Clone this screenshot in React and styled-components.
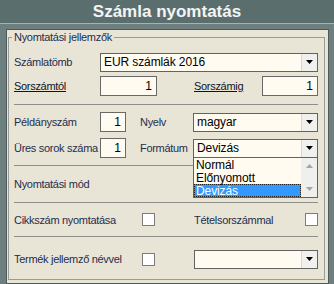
import React from "react";
import styled, { createGlobalStyle } from "styled-components";

const Global = createGlobalStyle`
  html, body { margin: 0; padding: 0; }
  body {
    background: #6e7f7f;
    font-family: "Liberation Sans", Arial, sans-serif;
    font-size: 11px;
    letter-spacing: -0.3px;
    width: 334px;
    height: 284px;
    overflow: hidden;
  }
`;

const TitleBar = styled.div`
  height: 23px;
  background: #5b6e6e;
  border-bottom: 1px solid #a4b2b2;
  color: #f4f4f4;
  font-weight: bold;
  font-size: 17px;
  letter-spacing: 0;
  line-height: 23px;
  text-align: center;
`;

const Body = styled.div`
  padding: 5px 0 0 6px;
`;

const Panel = styled.div`
  width: 323px;
  box-sizing: border-box;
  background: #e9e5d6;
  border: 1px solid #4f5959;
  padding: 0 3px 3px 1px;
`;

const Group = styled.fieldset`
  margin: 0;
  border: 1px solid #9a9a96;
  padding: 8px 6px 5px 5px;
  min-width: 0;
`;

const Legend = styled.legend`
  padding: 0 2px;
  margin-left: -2px;
  line-height: 14px;
  color: #1e2d4c;
`;

const Row = styled.div`
  flex: 1;
  display: flex;
  align-items: center;
  height: 20px;
  margin-top: ${(p) => p.$mt || 0}px;
`;

const Section = styled.div`
  display: flex;
  align-items: ${(p) => (p.$pt ? "flex-start" : "center")};
  height: ${(p) => p.$h}px;
  padding-top: ${(p) => p.$pt || 0}px;
  box-sizing: border-box;
`;

const Sep = styled.div`
  height: 1px;
  background: #8f8f8c;
  margin-top: ${(p) => p.$mt || 0}px;
`;

const Label = styled.span`
  flex: ${(p) => (p.$w ? "none" : "1")};
  width: ${(p) => (p.$w ? `${p.$w}px` : "auto")};
  margin-left: ${(p) => p.$ml || 0}px;
  color: ${(p) => (p.$link ? "#0c1426" : "#1e2d4c")};
  text-decoration: ${(p) => (p.$link ? "underline" : "none")};
  white-space: nowrap;
`;

const NumInput = styled.div`
  flex: ${(p) => (p.$w ? "none" : "1")};
  width: ${(p) => (p.$w ? `${p.$w}px` : "auto")};
  height: 20px;
  box-sizing: border-box;
  border: 1px solid #686868;
  background: #fffbf0;
  color: #000;
  text-align: right;
  padding-right: 4px;
  line-height: 18px;
  font-size: 12px;
  letter-spacing: 0;
`;

const SelectBox = styled.div`
  position: relative;
  flex: 1;
  height: 19px;
  margin-left: ${(p) => p.$ml || 0}px;
  box-sizing: border-box;
  border: 1px solid #626262;
  background: #fffbf0;
  display: flex;
  align-items: stretch;
`;

const SelectText = styled.span`
  flex: 1;
  padding-left: 3px;
  line-height: 17px;
  font-size: 12px;
  letter-spacing: -0.1px;
  color: #000;
`;

const DropButton = styled.span`
  width: 15px;
  background: #f0f0ee;
  border-left: 1px solid #d6d6d2;
  display: flex;
  align-items: center;
  justify-content: center;
`;

const List = styled.div`
  position: absolute;
  left: -1px;
  right: -1px;
  top: 17px;
  height: 41px;
  box-sizing: border-box;
  border: 1px solid #626262;
  background: #fffbf0;
  display: flex;
  z-index: 2;
`;

const Items = styled.div`
  flex: 1;
`;

const Item = styled.div`
  height: 13px;
  line-height: 12px;
  font-size: 12px;
  letter-spacing: -0.1px;
  padding-left: 1px;
  box-sizing: border-box;
  color: ${(p) => (p.$sel ? "#fff" : "#000")};
  background: ${(p) => (p.$sel ? "#3399ff" : "transparent")};
  border: 1px ${(p) => (p.$sel ? "dotted #222" : "solid transparent")};
`;

const ScrollBar = styled.div`
  width: 16px;
  background: #efefed;
  display: flex;
  flex-direction: column;
  justify-content: space-between;
  align-items: center;
  padding: 6px 0 6px;
  box-sizing: border-box;
`;

const Check = styled.span`
  flex: none;
  width: 13px;
  height: 13px;
  box-sizing: border-box;
  border: 1px solid #7c7c7c;
  background: #fff;
`;

const Tri = ({ up, color = "#000" }) => (
  <svg width="7" height="4" viewBox="0 0 7 4">
    <polygon points={up ? "0,4 7,4 3.5,0" : "0,0 7,0 3.5,4"} fill={color} />
  </svg>
);

const Select = ({ value, ml, children }) => (
  <SelectBox $ml={ml}>
    <SelectText>{value}</SelectText>
    <DropButton>
      <Tri />
    </DropButton>
    {children}
  </SelectBox>
);

export default function App() {
  return (
    <>
      <Global />
      <TitleBar>Számla nyomtatás</TitleBar>
      <Body>
        <Panel>
          <Group>
            <Legend>Nyomtatási jellemzők</Legend>
            <Row>
              <Label $w={86}>Számlatömb</Label>
              <Select value="EUR számlák 2016" />
            </Row>
            <Row $mt={4}>
              <Label $w={86} $link>
                Sorszámtól
              </Label>
              <NumInput $w={57}>1</NumInput>
              <Label $w={68} $ml={37} $link>
                Sorszámig
              </Label>
              <NumInput>1</NumInput>
            </Row>
            <Sep $mt={8} />
            <Row $mt={7}>
              <Label $w={86}>Példányszám</Label>
              <NumInput $w={26}>1</NumInput>
              <Label $w={53} $ml={14}>
                Nyelv
              </Label>
              <Select value="magyar" />
            </Row>
            <Row $mt={6}>
              <Label $w={86}>Üres sorok száma</Label>
              <NumInput $w={26}>1</NumInput>
              <Label $w={53} $ml={14}>
                Formátum
              </Label>
              <Select value="Devizás">
                <List>
                  <Items>
                    <Item>Normál</Item>
                    <Item>Előnyomott</Item>
                    <Item $sel>Devizás</Item>
                  </Items>
                  <ScrollBar>
                    <Tri up color="#a4a4a4" />
                    <Tri color="#a4a4a4" />
                  </ScrollBar>
                </List>
              </Select>
            </Row>
            <Sep $mt={7} />
            <Section $h={36}>
              <Label>Nyomtatási mód</Label>
            </Section>
            <Sep />
            <Section $h={33}>
              <Label $w={128}>Cikkszám nyomtatása</Label>
              <Check />
              <Label $ml={39}>Tételsorszámmal</Label>
              <Check />
            </Section>
            <Sep />
            <Section $h={37} $pt={12}>
              <Row>
                <Label $w={128}>Termék jellemző névvel</Label>
                <Check />
                <Select ml={39} value="" />
              </Row>
            </Section>
          </Group>
        </Panel>
      </Body>
    </>
  );
}
